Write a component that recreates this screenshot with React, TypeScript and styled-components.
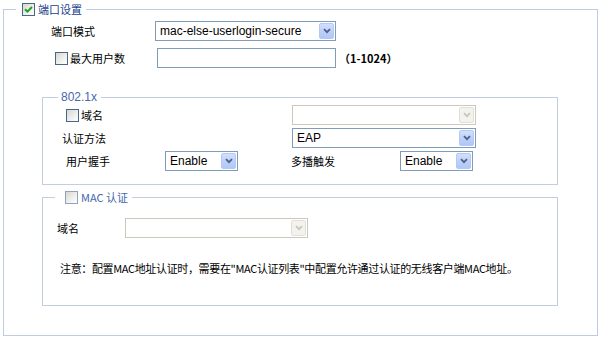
import React from 'react'
import styled, { createGlobalStyle } from 'styled-components'

const GlobalStyle = createGlobalStyle`
  html, body {
    margin: 0;
    padding: 0;
    background: #fff;
  }
  body {
    font-family: "Noto Sans CJK SC", "Liberation Sans", sans-serif;
    font-size: 11px;
    color: #000;
  }
`

const Page = styled.div`
  width: 601px;
  height: 339px;
  box-sizing: border-box;
  padding: 2px 3px 0 3px;
`

const OuterSet = styled.fieldset`
  margin: 0;
  padding: 0;
  min-width: 0;
  box-sizing: border-box;
  width: 595px;
  height: 334px;
  border: 1px solid #bfcbe2;
`

const InnerSet = styled.fieldset<{ $top: number; $height: number }>`
  margin: ${p => p.$top}px 0 0 38px;
  padding: 0;
  min-width: 0;
  box-sizing: border-box;
  width: 516px;
  height: ${p => p.$height}px;
  border: 1px solid #c3cde2;
`

const Legend = styled.legend<{ $ml: number; $pl: number; $pr: number }>`
  margin-left: ${p => p.$ml}px;
  padding: 0 ${p => p.$pr}px 0 ${p => p.$pl}px;
`

const LegendInner = styled.span<{ $color: string; $h: number; $latin?: boolean }>`
  display: flex;
  align-items: center;
  gap: 2px;
  height: ${p => p.$h}px;
  line-height: ${p => p.$h}px;
  color: ${p => p.$color};
  font-family: ${p => (p.$latin ? '"Liberation Sans", Arial, sans-serif' : '"Noto Sans CJK SC", sans-serif')};
  font-size: ${p => (p.$latin ? 12 : 11)}px;
`

const Row = styled.div<{ $top: number; $left: number }>`
  display: flex;
  align-items: center;
  height: 20px;
  margin-top: ${p => p.$top}px;
  padding-left: ${p => p.$left}px;
`

const Label = styled.span<{ $w: number }>`
  flex: none;
  width: ${p => p.$w}px;
  display: flex;
  align-items: center;
  gap: 1px;
  white-space: nowrap;
`

const Range = styled.span`
  margin-left: 3px;
  font-weight: bold;
`

const Grid = styled.div`
  display: grid;
  grid-template-columns: 103px 126px 109px auto;
  grid-template-rows: 20px 20px 20px;
  row-gap: 3px;
  margin-top: 2px;
  padding-left: 19px;
  align-items: center;
`

const Cell = styled.span<{ $span?: string; $indent?: number }>`
  grid-column: ${p => p.$span || 'auto'};
  padding-left: ${p => p.$indent || 0}px;
  display: flex;
  align-items: center;
  gap: 1px;
  white-space: nowrap;
`

const Note = styled.div`
  margin-top: 23px;
  padding-left: 17px;
  line-height: 14px;
  white-space: nowrap;
  letter-spacing: -0.35px;
`

const Box = styled.span<{ $checked?: boolean; $light?: boolean }>`
  flex: none;
  width: 13px;
  height: 13px;
  box-sizing: border-box;
  border: 1px solid ${p => (p.$light ? '#8fa3c0' : '#4a6587')};
  background: linear-gradient(135deg, #d8d8d2 0%, #f4f4f1 70%, #fff 100%);
  display: inline-flex;
  align-items: center;
  justify-content: center;
  margin-right: 1px;
`

const TextInput = styled.span`
  flex: none;
  width: 179px;
  height: 20px;
  box-sizing: border-box;
  border: 1px solid #7f9db9;
  background: #fff;
`

const SelectBox = styled.div<{ $w: number; $disabled?: boolean }>`
  flex: none;
  width: ${p => p.$w}px;
  height: 20px;
  box-sizing: border-box;
  border: 1px solid ${p => (p.$disabled ? '#cbc9be' : '#7f9db9')};
  background: #fff;
  display: flex;
  align-items: center;
  justify-content: space-between;
  padding: 0 1px 0 4px;
  font-family: "Liberation Sans", Arial, sans-serif;
  font-size: 12px;
  color: #000;
`

const ArrowButton = styled.span<{ $disabled?: boolean }>`
  flex: none;
  width: 15px;
  height: 16px;
  box-sizing: border-box;
  border: 1px solid ${p => (p.$disabled ? '#e2e0d6' : '#b3c8f5')};
  border-radius: 2px;
  background: ${p =>
    p.$disabled ? '#f3f2ec' : 'linear-gradient(180deg, #d3e0fd 0%, #bccffa 55%, #b1c7f6 100%)'};
  display: flex;
  align-items: center;
  justify-content: center;
`

function CheckBox({ checked, light }: { checked?: boolean; light?: boolean }) {
  return (
    <Box $checked={checked} $light={light}>
      {checked && (
        <svg width="11" height="11" viewBox="0 0 11 11">
          <path d="M2 5.2 L4.4 7.6 L9 3" stroke="#21a121" strokeWidth="2" fill="none" />
        </svg>
      )}
    </Box>
  )
}

function Select({ width, value, disabled }: { width: number; value?: string; disabled?: boolean }) {
  return (
    <SelectBox $w={width} $disabled={disabled}>
      <span>{value}</span>
      <ArrowButton $disabled={disabled}>
        <svg width="8" height="6" viewBox="0 0 8 6">
          <path
            d="M1 1.2 L4 4.2 L7 1.2"
            stroke={disabled ? '#c9c7bc' : '#4d6185'}
            strokeWidth="1.8"
            fill="none"
          />
        </svg>
      </ArrowButton>
    </SelectBox>
  )
}

export default function App() {
  return (
    <Page>
      <GlobalStyle />
      <OuterSet>
        <Legend $ml={12} $pl={6} $pr={4}>
          <LegendInner $color="#23418c" $h={14}>
            <CheckBox checked />
            端口设置
          </LegendInner>
        </Legend>

        <Row $top={5} $left={47}>
          <Label $w={104}>端口模式</Label>
          <Select width={181} value="mac-else-userlogin-secure" />
        </Row>
        <Row $top={7} $left={51}>
          <Label $w={102}>
            <CheckBox />
            最大用户数
          </Label>
          <TextInput />
          <Range>（1-1024）</Range>
        </Row>

        <InnerSet $top={23} $height={94}>
          <Legend $ml={15} $pl={3} $pr={4}>
            <LegendInner $color="#4468ad" $h={12} $latin>
              802.1x
            </LegendInner>
          </Legend>
          <Grid>
            <Cell $span="1 / 3" $indent={4}>
              <CheckBox />
              域名
            </Cell>
            <Cell $span="3 / 5" $indent={1}>
              <Select width={184} disabled />
            </Cell>
            <Cell $span="1 / 3">认证方法</Cell>
            <Cell $span="3 / 5" $indent={1}>
              <Select width={184} value="EAP" />
            </Cell>
            <Cell $indent={4}>用户握手</Cell>
            <Cell>
              <Select width={73} value="Enable" />
            </Cell>
            <Cell>多播触发</Cell>
            <Cell>
              <Select width={73} value="Enable" />
            </Cell>
          </Grid>
        </InnerSet>

        <InnerSet $top={6} $height={115}>
          <Legend $ml={12} $pl={10} $pr={4}>
            <LegendInner $color="#4468ad" $h={13}>
              <CheckBox light />
              MAC 认证
            </LegendInner>
          </Legend>
          <Row $top={14} $left={14}>
            <Label $w={68}>域名</Label>
            <Select width={183} disabled />
          </Row>
          <Note>注意：配置MAC地址认证时，需要在"MAC认证列表"中配置允许通过认证的无线客户端MAC地址。</Note>
        </InnerSet>
      </OuterSet>
    </Page>
  )
}
